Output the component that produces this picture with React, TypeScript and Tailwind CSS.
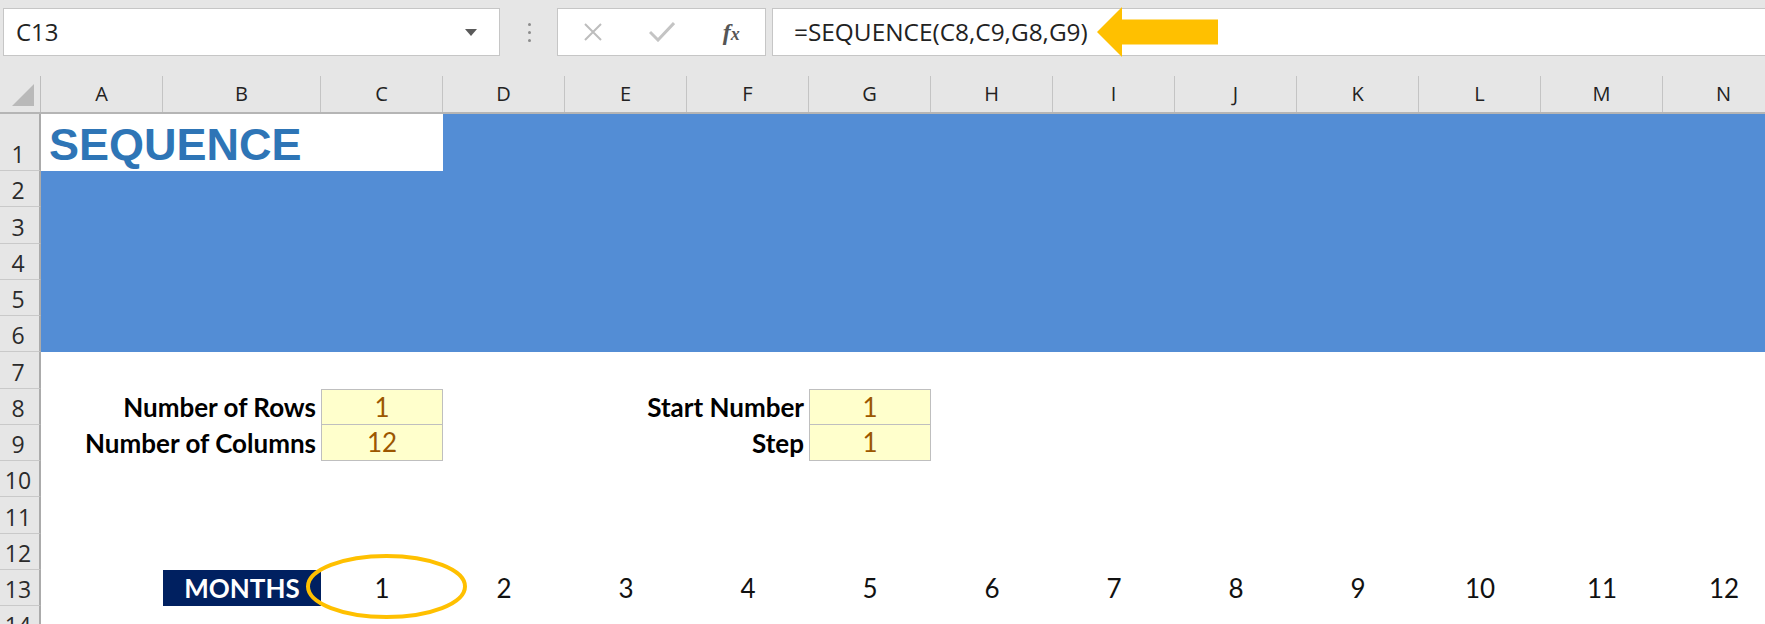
import React from 'react'

// Excel-like sheet showing the SEQUENCE function

const COLS = ['A', 'B', 'C', 'D', 'E', 'F', 'G', 'H', 'I', 'J', 'K', 'L', 'M', 'N']
const colW = (i: number) => (i === 1 ? 'w-[158px]' : 'w-[122px]')

function RowHead({ n, last }: { n: number; last?: boolean }) {
  return (
    <div
      className={`w-[41px] shrink-0 h-full bg-[#E6E6E6] border-r-2 border-[#ABABAB] ${
        last ? '' : 'border-b border-b-[#C9C9C9]'
      } flex items-end justify-center pr-[3px] pb-[4px] font-['Open_Sans',sans-serif] text-[23px] leading-none text-[#2b2b2b]`}
    >
      {n}
    </div>
  )
}

function Row({ n, h, children }: { n: number; h: string; children?: React.ReactNode }) {
  return (
    <div className={`flex ${h}`}>
      <RowHead n={n} />
      {children}
    </div>
  )
}

function Label({ text, w }: { text: string; w: string }) {
  return (
    <div className={`${w} shrink-0 flex items-center justify-end pr-[5px] font-['Lato',sans-serif] font-bold text-[26px] leading-none text-black whitespace-nowrap`}>
      {text}
    </div>
  )
}

function Input({ value, first }: { value: string; first?: boolean }) {
  return (
    <div
      className={`w-[122px] shrink-0 bg-[#FFFFCC] border border-[#BFBFBF] ${
        first ? '' : 'border-t-0'
      } flex items-center justify-center font-['Lato',sans-serif] text-[26px] leading-none text-[#9C5700]`}
    >
      {value}
    </div>
  )
}

function FormulaBar() {
  return (
    <div className="h-[76px] bg-[#E6E6E6] flex items-start pt-[8px] font-['Open_Sans',sans-serif]">
      {/* Name box */}
      <div className="ml-[3px] w-[497px] h-[48px] shrink-0 bg-white border border-[#C6C6C6] flex items-center pl-[12px] pr-[22px]">
        <span className="text-[24px] leading-none text-[#222]">C13</span>
        <svg className="ml-auto" width="12" height="7" viewBox="0 0 12 7">
          <polygon points="0,0 12,0 6,7" fill="#5A5A5A" />
        </svg>
      </div>

      {/* Splitter dots */}
      <div className="w-[58px] h-[48px] shrink-0 flex flex-col items-center justify-center gap-[5px]">
        <span className="w-[3px] h-[3px] rounded-full bg-[#8C8C8C]" />
        <span className="w-[3px] h-[3px] rounded-full bg-[#8C8C8C]" />
        <span className="w-[3px] h-[3px] rounded-full bg-[#8C8C8C]" />
      </div>

      {/* Cancel / Enter / fx */}
      <div className="w-[209px] h-[48px] shrink-0 bg-white border border-[#C6C6C6] flex items-center -ml-px">
        <div className="w-[70px] flex justify-center">
          <svg width="20" height="20" viewBox="0 0 20 20">
            <path d="M2 2 L18 18 M18 2 L2 18" stroke="#BDBDBD" strokeWidth="2" fill="none" />
          </svg>
        </div>
        <div className="w-[70px] flex justify-center">
          <svg width="26" height="20" viewBox="0 0 26 20">
            <path d="M1 10 L9 18 L25 1" stroke="#C4C4C4" strokeWidth="3" fill="none" />
          </svg>
        </div>
        <div className="w-[68px] flex justify-center">
          <span className="font-['Liberation_Serif',serif] italic font-bold text-[24px] leading-none text-[#555]">
            f<span className="text-[18px]">x</span>
          </span>
        </div>
      </div>

      {/* Formula */}
      <div className="ml-[6px] flex-1 h-[48px] bg-white border border-r-0 border-[#C6C6C6] flex items-center pl-[21px]">
        <span className="text-[24.4px] leading-none text-[#222] whitespace-nowrap">=SEQUENCE(C8,C9,G8,G9)</span>
        <svg className="ml-[9px] shrink-0" width="122" height="50" viewBox="0 0 122 50">
          <polygon points="0,25 25,0 25,12.5 121,12.5 121,37.5 25,37.5 25,50" fill="#FFC000" />
        </svg>
      </div>
    </div>
  )
}

function ColumnHeader() {
  return (
    <div className="flex h-[38px] bg-[#E6E6E6] border-b-2 border-[#B5B5B5] font-['Open_Sans',sans-serif]">
      <div className="w-[41px] shrink-0 h-full border-r border-[#BDBDBD] relative">
        <svg className="absolute right-[6px] bottom-[6px]" width="22" height="22" viewBox="0 0 22 22">
          <polygon points="22,0 22,22 0,22" fill="#B9B9B9" />
        </svg>
      </div>
      {COLS.map((c, i) => (
        <div
          key={c}
          className={`${colW(i)} shrink-0 h-full border-r border-[#C4C4C4] flex items-center justify-center text-[20px] leading-none text-[#222]`}
        >
          {c}
        </div>
      ))}
    </div>
  )
}

export default function App() {
  const blue = 'flex-1 bg-[#538DD5]'
  const rowH = 'h-[36.25px]'

  return (
    <div className="w-[1765px] h-[624px] overflow-hidden bg-white">
      <FormulaBar />
      <ColumnHeader />

      {/* Row 1: title */}
      <Row n={1} h="h-[57px]">
        <div className="w-[402px] shrink-0 bg-white flex items-end pl-[8px] pb-[4px]">
          <span className="font-['Liberation_Sans',Arial,sans-serif] font-bold text-[45px] leading-none text-[#2E75B6]">
            SEQUENCE
          </span>
        </div>
        <div className={blue} />
      </Row>

      {[2, 3, 4, 5, 6].map((n) => (
        <Row key={n} n={n} h={rowH}>
          <div className={blue} />
        </Row>
      ))}

      <Row n={7} h={rowH} />

      <Row n={8} h={rowH}>
        <div className="w-[122px] shrink-0" />
        <Label text="Number of Rows" w="w-[158px]" />
        <Input value="1" first />
        <div className="w-[244px] shrink-0" />
        <Label text="Start Number" w="w-[122px]" />
        <Input value="1" first />
      </Row>

      <Row n={9} h={rowH}>
        <div className="w-[122px] shrink-0" />
        <Label text="Number of Columns" w="w-[158px]" />
        <Input value="12" />
        <div className="w-[244px] shrink-0" />
        <Label text="Step" w="w-[122px]" />
        <Input value="1" />
      </Row>

      {[10, 11, 12].map((n) => (
        <Row key={n} n={n} h={rowH} />
      ))}

      <Row n={13} h={rowH}>
        <div className="w-[122px] shrink-0" />
        <div className="w-[158px] shrink-0 bg-[#002060] flex items-center justify-center font-['Lato',sans-serif] font-bold text-[26px] leading-none text-white">
          MONTHS
        </div>
        {Array.from({ length: 12 }, (_, i) => (
          <div
            key={i}
            className="w-[122px] shrink-0 relative flex items-center justify-center font-['Lato',sans-serif] text-[26px] leading-none text-[#111]"
          >
            {i + 1}
            {i === 0 && (
              <svg
                className="absolute left-[-15px] top-[-16px] z-10 overflow-visible"
                width="161"
                height="65"
                viewBox="0 0 161 65"
              >
                <ellipse cx="80.5" cy="32.5" rx="78.5" ry="30.5" fill="none" stroke="#FFC000" strokeWidth="4" />
              </svg>
            )}
          </div>
        ))}
      </Row>

      <Row n={14} h={rowH} />
    </div>
  )
}
